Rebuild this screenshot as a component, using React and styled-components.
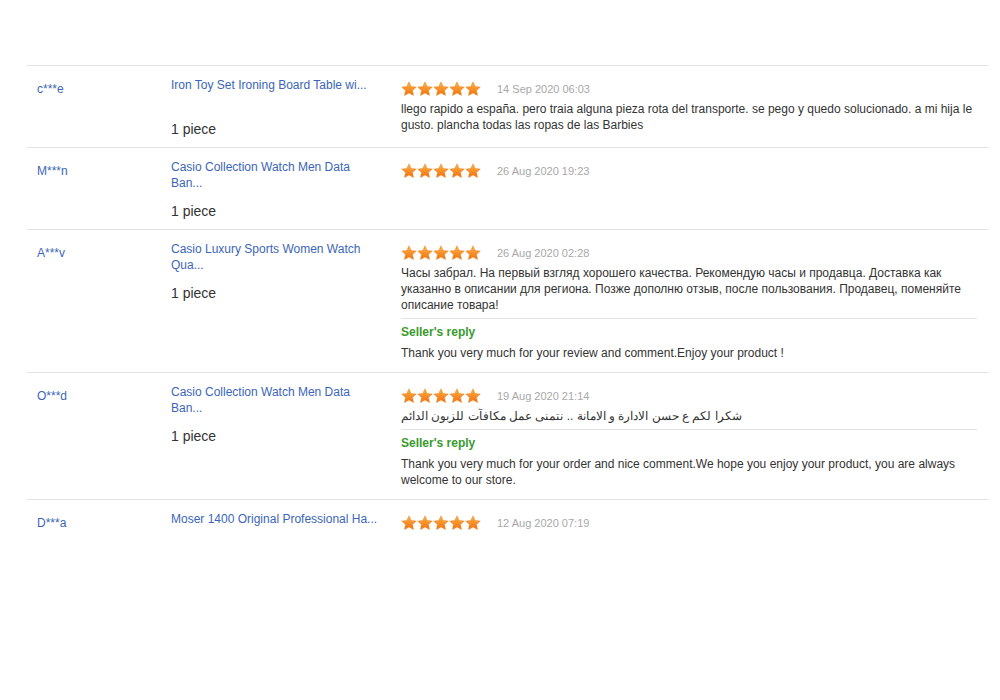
import styled, { createGlobalStyle } from "styled-components";

const GlobalStyle = createGlobalStyle`
  body {
    margin: 0;
    background: #ffffff;
    font-family: "Liberation Sans", Arial, sans-serif;
  }
`;

const reviews = [
  {
    user: "c***e",
    product: "Iron Toy Set Ironing Board Table wi...",
    date: "14 Sep 2020 06:03",
    text: "llego rapido a españa. pero traia alguna pieza rota del transporte. se pego y quedo solucionado. a mi hija le gusto. plancha todas las ropas de las Barbies",
  },
  {
    user: "M***n",
    product: "Casio Collection Watch Men Data Ban...",
    date: "26 Aug 2020 19:23",
  },
  {
    user: "A***v",
    product: "Casio Luxury Sports Women Watch Qua...",
    date: "26 Aug 2020 02:28",
    text: "Часы забрал. На первый взгляд хорошего качества. Рекомендую часы и продавца. Доставка как указанно в описании для региона. Позже дополню отзыв, после пользования. Продавец, поменяйте описание товара!",
    reply: "Thank you very much for your review and comment.Enjoy your product !",
  },
  {
    user: "O***d",
    product: "Casio Collection Watch Men Data Ban...",
    date: "19 Aug 2020 21:14",
    text: "شكرا لكم ع حسن الادارة و الامانة .. نتمنى عمل مكافآت للزبون الدائم",
    rtl: true,
    reply: "Thank you very much for your order and nice comment.We hope you enjoy your product, you are always welcome to our store.",
  },
  {
    user: "D***a",
    product: "Moser 1400 Original Professional Ha...",
    date: "12 Aug 2020 07:19",
    short: true,
  },
];

const Star = () => (
  <svg width="16" height="16" viewBox="0 0 24 24">
    <defs>
      <linearGradient id="sg" x1="0" y1="0" x2="0" y2="1">
        <stop offset="0" stopColor="#ffb347" />
        <stop offset="1" stopColor="#f07010" />
      </linearGradient>
    </defs>
    <path
      d="M12 1.2l3.3 7 7.6.9-5.6 5.2 1.5 7.6L12 18.1l-6.8 3.8 1.5-7.6L1.1 9.1l7.6-.9z"
      fill="url(#sg)"
      stroke="#e8780f"
      strokeWidth="0.6"
    />
  </svg>
);

export default function App() {
  return (
    <>
      <GlobalStyle />
      <Table>
        {reviews.map((r, i) => (
          <Row key={i} $last={i === reviews.length - 1}>
            <User>{r.user}</User>
            <Product>
              <ProductTitle>{r.product}</ProductTitle>
              {!r.short && <Qty>1 piece</Qty>}
            </Product>
            <Review>
              <Meta>
                <Stars>
                  {[0, 1, 2, 3, 4].map((s) => (
                    <Star key={s} />
                  ))}
                </Stars>
                <Date>{r.date}</Date>
              </Meta>
              {r.text && (
                <Text>
                  <span dir={r.rtl ? "rtl" : "ltr"}>{r.text}</span>
                </Text>
              )}
              {r.reply && (
                <Reply>
                  <ReplyLabel>Seller's reply</ReplyLabel>
                  <ReplyText>{r.reply}</ReplyText>
                </Reply>
              )}
            </Review>
          </Row>
        ))}
      </Table>
    </>
  );
}

const Table = styled.div`
  margin: 65px 0 0 27px;
  width: 961px;
  border-top: 1px solid #e3e3e3;
`;

const Row = styled.div`
  display: grid;
  grid-template-columns: 144px 230px 1fr;
  padding: 14px 11px ${(p) => (p.$last ? "14px" : "9px")} 0;
  border-bottom: ${(p) => (p.$last ? "none" : "1px solid #e3e3e3")};
`;

const User = styled.div`
  padding: 1px 0 0 10px;
  font-size: 12px;
  line-height: 16px;
  color: #3b66b8;
`;

const Product = styled.div`
  display: flex;
  flex-direction: column;
  margin-top: -3px;
`;

const ProductTitle = styled.div`
  width: 212px;
  height: 32px;
  font-size: 12px;
  line-height: 16px;
  color: #3b66b8;
`;

const Qty = styled.div`
  margin-top: 11px;
  font-size: 14px;
  line-height: 18px;
  color: #333333;
`;

const Review = styled.div`
  display: flex;
  flex-direction: column;
`;

const Meta = styled.div`
  display: flex;
  align-items: center;
  height: 18px;
  gap: 16px;
`;

const Stars = styled.div`
  display: flex;
  svg {
    display: block;
  }
`;

const Date = styled.span`
  font-size: 11px;
  color: #a8a8a8;
`;

const Text = styled.div`
  margin-top: 3px;
  font-size: 12px;
  line-height: 16px;
  color: #333333;
  text-align: left;
`;

const Reply = styled.div`
  margin: 5px 0 2px;
  border-top: 1px solid #e3e3e3;
  padding-top: 4px;
`;

const ReplyLabel = styled.div`
  font-size: 12px;
  line-height: 18px;
  font-weight: bold;
  color: #3a9a2e;
`;

const ReplyText = styled.div`
  margin-top: 4px;
  font-size: 12px;
  line-height: 16px;
  color: #333333;
`;
